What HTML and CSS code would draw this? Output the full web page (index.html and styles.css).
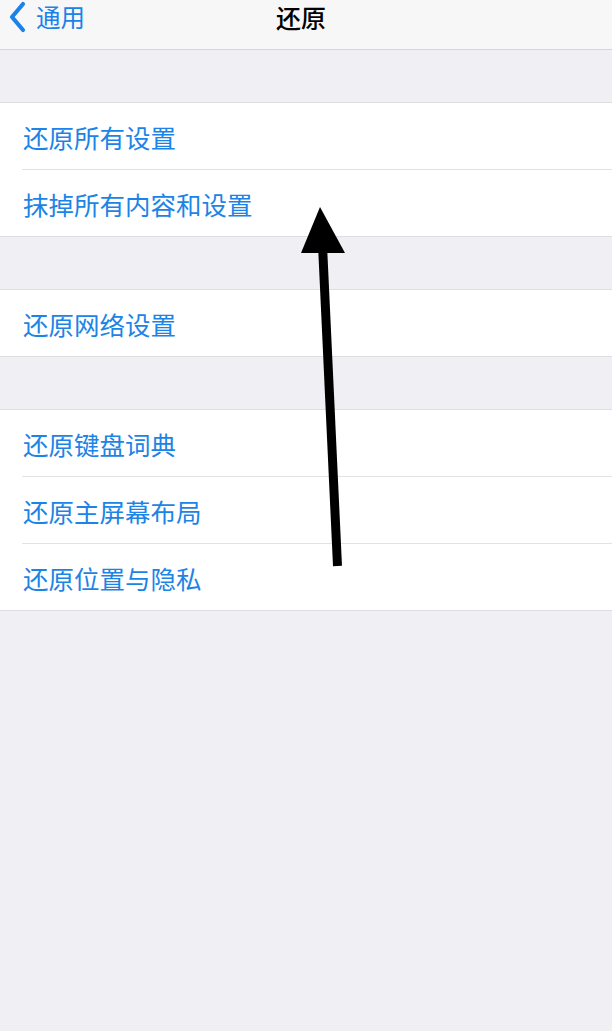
FILE: index.html
```html
<!DOCTYPE html>
<html lang="zh-CN">
<head>
<meta charset="utf-8">
<title>还原</title>
<link rel="stylesheet" href="styles.css">
</head>
<body>
<div class="screen">
  <header class="nav">
    <div class="back">
      <svg class="chev" width="18" height="32" viewBox="0 0 18 32"><path d="M15 3 L4 16 L15 29" fill="none" stroke="#1a82e8" stroke-width="4.2" stroke-linecap="round" stroke-linejoin="round"/></svg>
      <span class="back-label">通用</span>
    </div>
    <div class="title">还原</div>
  </header>
  <div class="gap"></div>
  <section class="group">
    <div class="row">还原所有设置</div>
    <div class="row">抹掉所有内容和设置</div>
  </section>
  <div class="gap"></div>
  <section class="group">
    <div class="row">还原网络设置</div>
  </section>
  <div class="gap"></div>
  <section class="group">
    <div class="row">还原键盘词典</div>
    <div class="row">还原主屏幕布局</div>
    <div class="row">还原位置与隐私</div>
  </section>
  <svg class="arrow" width="612" height="1031" viewBox="0 0 612 1031">
    <line x1="337.5" y1="566" x2="322.5" y2="245" stroke="#000" stroke-width="9"/>
    <polygon points="320,207 301,253 345,253" fill="#000"/>
  </svg>
</div>
</body>
</html>
```
FILE: styles.css
```css
html, body {
  margin: 0;
  padding: 0;
  background: #efeff4;
}
.screen {
  position: relative;
  width: 612px;
  height: 1031px;
  overflow: hidden;
  background: #efeff4;
  font-family: "Noto Sans CJK SC", "Noto Sans", sans-serif;
}
.nav {
  position: relative;
  height: 49px;
  background: #f7f7f8;
  border-bottom: 1px solid #d6d6da;
  display: flex;
  align-items: center;
}
.back {
  display: flex;
  align-items: center;
  padding-left: 8px;
  gap: 10px;
  margin-top: -15px;
}
.chev { display: block; }
.back-label {
  color: #1a82e8;
  font-size: 24.5px;
  line-height: 30px;
}
.title {
  position: absolute;
  left: 0;
  right: 0;
  top: 0;
  text-align: center;
  font-size: 25px;
  font-weight: 500;
  line-height: 34px;
  color: #000;
  padding-right: 10px;
}
.gap {
  height: 52px;
}
.group {
  background: #fff;
  border-top: 1px solid #dedee2;
  border-bottom: 1px solid #dedee2;
}
.row {
  height: 66px;
  margin-left: 22px;
  display: flex;
  align-items: center;
  color: #1c84e6;
  font-size: 25.5px;
  padding-left: 1px;
  box-sizing: border-box;
}
.row + .row {
  border-top: 1px solid #e2e2e6;
  height: 67px;
}
.arrow {
  position: absolute;
  left: 0;
  top: 0;
  pointer-events: none;
}
```
